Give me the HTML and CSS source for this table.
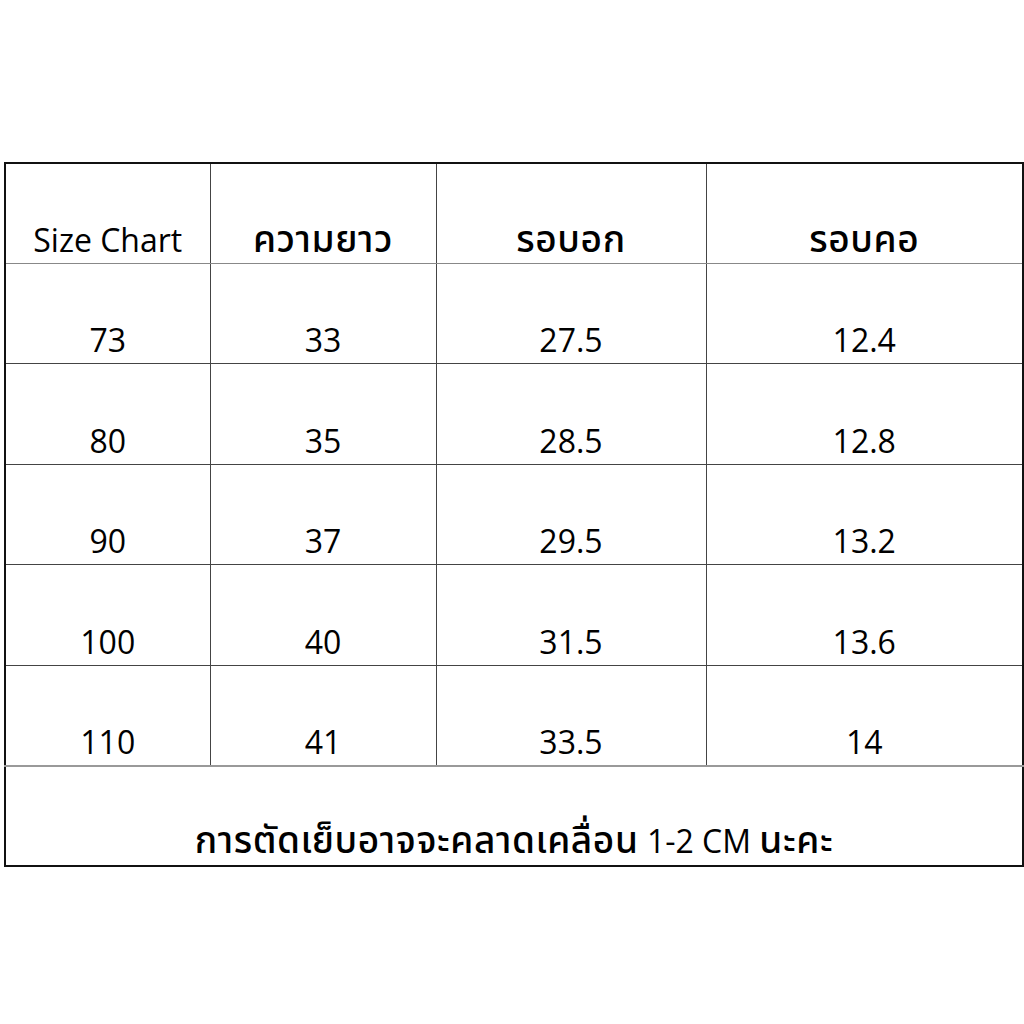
FILE: index.html
```html
<!DOCTYPE html>
<html lang="th">
<head>
<meta charset="utf-8">
<title>Size Chart</title>
<link rel="stylesheet" href="styles.css">
</head>
<body>
<div class="page">
  <table class="chart">
    <colgroup>
      <col class="c1"><col class="c2"><col class="c3"><col class="c4">
    </colgroup>
    <tr class="head">
      <td>Size Chart</td>
      <td><span class="th">ความยาว</span></td>
      <td><span class="th">รอบอก</span></td>
      <td><span class="th">รอบคอ</span></td>
    </tr>
    <tr class="row"><td>73</td><td>33</td><td>27.5</td><td>12.4</td></tr>
    <tr class="row"><td>80</td><td>35</td><td>28.5</td><td>12.8</td></tr>
    <tr class="row"><td>90</td><td>37</td><td>29.5</td><td>13.2</td></tr>
    <tr class="row"><td>100</td><td>40</td><td>31.5</td><td>13.6</td></tr>
    <tr class="row last"><td>110</td><td>41</td><td>33.5</td><td>14</td></tr>
    <tr class="foot"><td colspan="4"><span class="th">การตัดเย็บอาจจะคลาดเคลื่อน</span> 1-2 CM <span class="th">นะคะ</span></td></tr>
  </table>
</div>
</body>
</html>
```
FILE: styles.css
```css
html, body {
  margin: 0;
  padding: 0;
  background: #fff;
}
.page {
  padding: 162px 0 0 4px;
}
.chart {
  border-collapse: collapse;
  table-layout: fixed;
  width: 1018px;
  border: 2px solid #111;
  font-family: "Open Sans", "Noto Sans", "Noto Sans Thai", sans-serif;
  font-size: 32px;
  color: #000;
}
.c1 { width: 205px; }
.c2 { width: 226px; }
.c3 { width: 270px; }
.c4 { width: 317px; }
.chart td {
  height: 100px;
  box-sizing: border-box;
  border: 1px solid #444;
  text-align: center;
  vertical-align: bottom;
  line-height: 1;
  padding: 0 0 7px 0;
  white-space: nowrap;
}
.chart tr.row td {
  height: 100.6px;
}
.chart tr.head td {
  border-bottom-color: #888;
}
.chart tr.last td {
  border-bottom: 2px solid #999;
}
.th {
  font-size: 37px;
  font-weight: 500;
  letter-spacing: 0.6px;
}
.chart tr.foot td {
  height: 100px;
  padding-bottom: 8px;
}
```
